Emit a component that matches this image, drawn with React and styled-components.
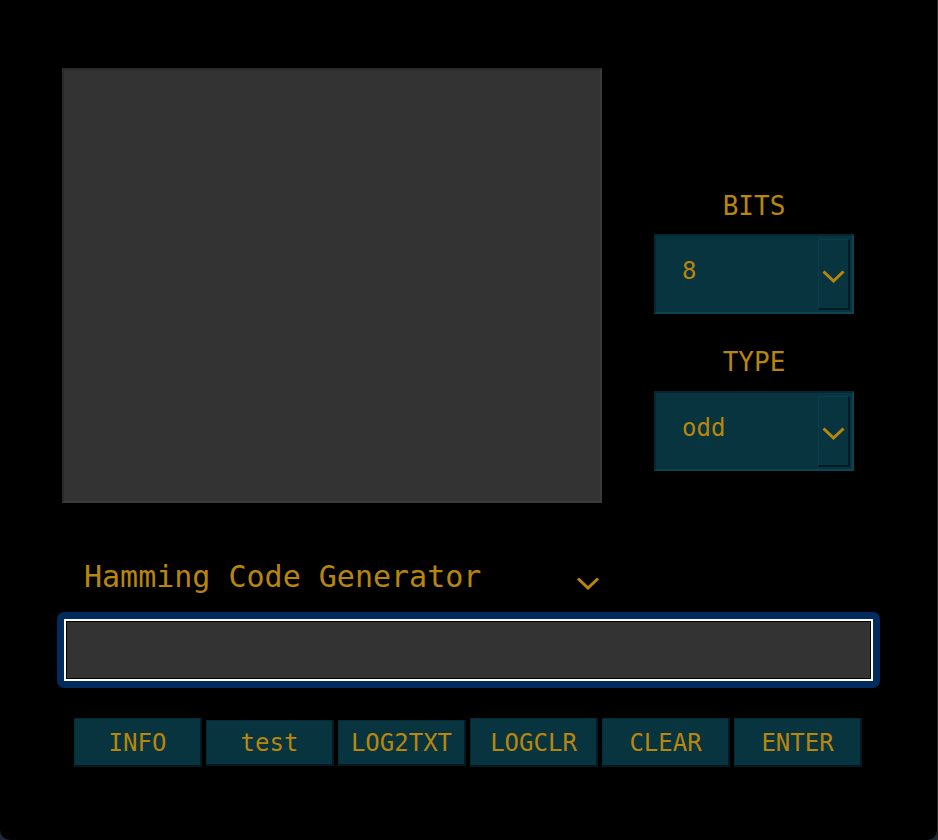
import React from 'react';
import styled, { createGlobalStyle } from 'styled-components';

const GOLD = '#b8860b';

const Global = createGlobalStyle`
  html, body { margin: 0; padding: 0; background: #1d2a3a; }
  body { font-family: "DejaVu Sans Mono", "Liberation Mono", monospace; }
`;

const Frame = styled.div`
  width: 938px;
  height: 840px;
  box-sizing: border-box;
  background: #000;
  border-right: 1px solid #2a2a2a;
  border-radius: 0 0 10px 10px;
  padding-top: 68px;
  display: flex;
  flex-direction: column;
`;

const TopSection = styled.div`
  display: flex;
  align-items: flex-start;
  padding-left: 62px;
`;

const Canvas = styled.div`
  width: 540px;
  height: 435px;
  box-sizing: border-box;
  background: #333333;
  border: 2px solid;
  border-color: #2a2a2a #3b3b3b #3b3b3b #2a2a2a;
`;

const SidePanel = styled.div`
  width: 200px;
  margin-left: 52px;
  margin-top: 123px;
  display: flex;
  flex-direction: column;
  align-items: center;
`;

const Label = styled.div`
  font-size: 26px;
  line-height: 28px;
  height: 28px;
  padding-top: 1px;
  box-sizing: border-box;
  color: ${GOLD};
  margin-top: ${(p) => p.$gap || 0}px;
`;

const Select = styled.div`
  width: 200px;
  height: 80px;
  box-sizing: border-box;
  margin-top: ${(p) => p.$gap}px;
  background: #08343f;
  border: 2px solid;
  border-color: #052731 #0d4453 #0d4453 #052731;
  display: flex;
  align-items: center;
  padding: 3px 2px 2px 26px;
  color: ${GOLD};
  font-size: 24px;
`;

const SelectValue = styled.span`
  flex: 1;
  padding-bottom: 7px;
`;

const ArrowButton = styled.div`
  width: 32px;
  height: 71px;
  box-sizing: border-box;
  border: 1px solid;
  border-color: #0b3d4a #021b22 #021b22 #0b3d4a;
  border-width: 1px 2px 2px 1px;
  display: flex;
  align-items: center;
  justify-content: center;
  padding-top: 5px;
`;

const Chevron = ({ w = 23, h = 13 }) => (
  <svg width={w} height={h} viewBox="0 0 23 13">
    <polyline points="1.5,1.5 11.5,11 21.5,1.5" fill="none" stroke={GOLD} strokeWidth="3" />
  </svg>
);

const ModeRow = styled.div`
  margin-top: 56px;
  margin-left: 62px;
  width: 540px;
  height: 36px;
  display: flex;
  align-items: center;
  justify-content: space-between;
  padding: 0 2px 0 22px;
  box-sizing: border-box;
  color: ${GOLD};
  font-size: 30px;
  line-height: 36px;
`;

const ModeChevron = styled.span`
  display: flex;
  padding-top: 12px;
`;

const InputRing = styled.div`
  margin-top: 17px;
  margin-left: 57px;
  width: 823px;
  height: 76px;
  box-sizing: border-box;
  padding: 7px;
  background: #012a5e;
  border-radius: 7px;
`;

const InputField = styled.div`
  height: 100%;
  box-sizing: border-box;
  border: 2px solid #ffffff;
  box-shadow: inset 0 0 0 1px #000;
  background: #333333;
`;

const ButtonRow = styled.div`
  margin-top: 30px;
  padding-left: 74px;
  display: flex;
  gap: 4px;
  align-items: flex-start;
`;

const Button = styled.div`
  width: 128px;
  height: ${(p) => (p.$short ? 46 : 49)}px;
  margin-top: ${(p) => (p.$short ? 2 : 0)}px;
  box-sizing: border-box;
  background: #08343f;
  border: 1px solid;
  border-color: #062a33 #03191f #03191f #062a33;
  border-width: 1px 2px 2px 1px;
  display: flex;
  align-items: center;
  justify-content: center;
  padding-top: ${(p) => (p.$short ? 0 : 2)}px;
  color: ${GOLD};
  font-size: 24px;
`;

const buttons = [
  { label: 'INFO' },
  { label: 'test', short: true },
  { label: 'LOG2TXT', short: true },
  { label: 'LOGCLR' },
  { label: 'CLEAR' },
  { label: 'ENTER' },
];

export default function App() {
  return (
    <>
      <Global />
      <Frame>
        <TopSection>
          <Canvas />
          <SidePanel>
            <Label>BITS</Label>
            <Select $gap={15}>
              <SelectValue>8</SelectValue>
              <ArrowButton><Chevron /></ArrowButton>
            </Select>
            <Label $gap={33}>TYPE</Label>
            <Select $gap={16}>
              <SelectValue>odd</SelectValue>
              <ArrowButton><Chevron /></ArrowButton>
            </Select>
          </SidePanel>
        </TopSection>
        <ModeRow>
          <span>Hamming Code Generator</span>
          <ModeChevron><Chevron w={24} h={13} /></ModeChevron>
        </ModeRow>
        <InputRing>
          <InputField />
        </InputRing>
        <ButtonRow>
          {buttons.map((b) => (
            <Button key={b.label} $short={b.short}>{b.label}</Button>
          ))}
        </ButtonRow>
      </Frame>
    </>
  );
}
